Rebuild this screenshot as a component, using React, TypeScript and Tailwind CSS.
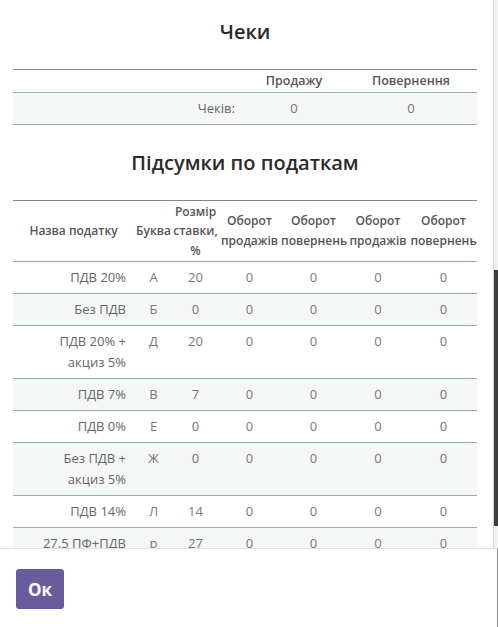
import React from "react";

const rows: { name: string[]; letter: string; rate: string }[] = [
  { name: ["ПДВ 20%"], letter: "А", rate: "20" },
  { name: ["Без ПДВ"], letter: "Б", rate: "0" },
  { name: ["ПДВ 20% +", "акциз 5%"], letter: "Д", rate: "20" },
  { name: ["ПДВ 7%"], letter: "В", rate: "7" },
  { name: ["ПДВ 0%"], letter: "Е", rate: "0" },
  { name: ["Без ПДВ +", "акциз 5%"], letter: "Ж", rate: "0" },
  { name: ["ПДВ 14%"], letter: "Л", rate: "14" },
  { name: ["27.5 ПФ+ПДВ"], letter: "р", rate: "27" },
];

export default function App() {
  return (
    <div
      className="w-[498px] h-[627px] flex flex-col bg-white overflow-hidden"
      style={{ fontFamily: '"Open Sans", "Noto Sans", sans-serif' }}
    >
      <div className="h-[548px] flex flex-row overflow-hidden">
        <div className="flex-1 pl-[13px] pr-[16px] overflow-hidden">
          <h2 className="mt-[18px] mb-[23px] text-center text-[20px] leading-[28px] font-semibold text-[#2a2a2a]">
            Чеки
          </h2>
          <table className="w-[464px] table-fixed border-collapse text-[13px]">
            <colgroup>
              <col className="w-[230px]" />
              <col className="w-[102px]" />
              <col className="w-[132px]" />
            </colgroup>
            <thead>
              <tr className="border-t border-t-[#7c8a90] border-b border-b-[#8fb1ba] leading-[20px] text-[12.5px]">
                <th className="py-[1px]"></th>
                <th className="py-[1px] font-semibold text-[#555] text-center">Продажу</th>
                <th className="py-[1px] font-semibold text-[#555] text-center">Повернення</th>
              </tr>
            </thead>
            <tbody>
              <tr className="bg-[#f5f6f6] border-b border-b-[#8fb1ba] leading-[21px]">
                <td className="py-[5px] pr-[8px] text-right text-[#666]">Чеків:</td>
                <td className="py-[5px] text-center text-[#777]">0</td>
                <td className="py-[5px] text-center text-[#777]">0</td>
              </tr>
            </tbody>
          </table>

          <h2 className="mt-[24px] mb-[23px] text-center text-[20px] leading-[28px] font-semibold text-[#2a2a2a]">
            Підсумки по податкам
          </h2>
          <table className="w-[464px] table-fixed border-collapse text-[13px]">
            <colgroup>
              <col className="w-[121px]" />
              <col className="w-[39px]" />
              <col className="w-[45px]" />
              <col className="w-[63px]" />
              <col className="w-[65px]" />
              <col className="w-[64px]" />
              <col className="w-[67px]" />
            </colgroup>
            <thead>
              <tr className="border-t border-t-[#7c8a90] border-b border-b-[#8fb1ba] text-[#555] text-[12px] leading-[19.5px]">
                <th className="py-[0.5px] font-semibold text-center">Назва податку</th>
                <th className="py-[0.5px] font-semibold text-center">Буква</th>
                <th className="py-[0.5px] font-semibold text-center">
                  Розмір
                  <br />
                  ставки,
                  <br />%
                </th>
                <th className="py-[0.5px] font-semibold text-center whitespace-nowrap">
                  Оборот
                  <br />
                  продажів
                </th>
                <th className="py-[0.5px] font-semibold text-center whitespace-nowrap">
                  Оборот
                  <br />
                  повернень
                </th>
                <th className="py-[0.5px] font-semibold text-center whitespace-nowrap">
                  Оборот
                  <br />
                  продажів
                </th>
                <th className="py-[0.5px] font-semibold text-center whitespace-nowrap">
                  Оборот
                  <br />
                  повернень
                </th>
              </tr>
            </thead>
            <tbody>
              {rows.map((r, i) => (
                <tr
                  key={i}
                  className={
                    i % 2 === 1
                      ? "bg-[#f5f6f6] border-b border-b-[#8fb1ba] leading-[21px]"
                      : "bg-white border-b border-b-[#8fb1ba] leading-[21px]"
                  }
                >
                  <td className="py-[5px] pr-[8px] text-right align-top text-[#666] whitespace-nowrap">
                    {r.name.map((n, j) => (
                      <div key={j}>{n}</div>
                    ))}
                  </td>
                  <td className="py-[5px] text-center align-top text-[#777]">{r.letter}</td>
                  <td className="py-[5px] text-center align-top text-[#777]">{r.rate}</td>
                  <td className="py-[5px] text-center align-top text-[#777]">0</td>
                  <td className="py-[5px] text-center align-top text-[#777]">0</td>
                  <td className="py-[5px] text-center align-top text-[#777]">0</td>
                  <td className="py-[5px] text-center align-top text-[#777]">0</td>
                </tr>
              ))}
            </tbody>
          </table>
        </div>
        <div className="w-[5px] border-l border-l-[#d4d4d4] bg-[#f1f1f1] flex flex-col">
          <div className="mt-[270px] h-[256px] bg-[#3c3c3c]"></div>
        </div>
      </div>
      <div className="flex-1 border-t border-t-[#e2e2e2] border-r border-r-[#8a8a8a] pl-[16px] pt-[20px]">
        <button className="w-[48px] h-[40px] rounded-[3px] bg-[#6a5b9d] text-white text-[17px] font-bold leading-none">
          Ок
        </button>
      </div>
    </div>
  );
}
